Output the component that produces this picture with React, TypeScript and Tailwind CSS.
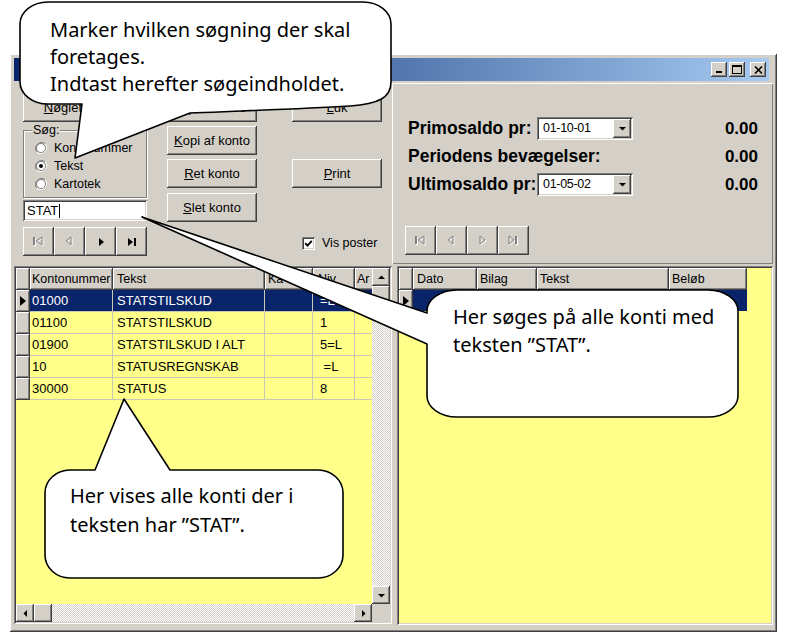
import React from "react";

const RAISED =
  "shadow-[inset_-1px_-1px_#404040,inset_1px_1px_#ffffff,inset_-2px_-2px_#808080,inset_2px_2px_#d4d0c8]";
const SUNKEN =
  "shadow-[inset_1px_1px_#808080,inset_-1px_-1px_#ffffff,inset_2px_2px_#404040,inset_-2px_-2px_#d4d0c8]";
const DITHER =
  "bg-[image:repeating-conic-gradient(#d4d0c8_0_25%,#ffffff_0_50%)] bg-[length:2px_2px]";
const COMIC = "font-['Comic_Sans_MS','Noto_Sans',sans-serif] text-[20px] text-black";

type Kind = "first" | "prev" | "next" | "last";

const shapes: Record<Kind, { tri: string; bar?: number }> = {
  first: { tri: "10,1 4,5 10,9", bar: 1 },
  prev: { tri: "8,1 3,5 8,9" },
  next: { tri: "4,1 9,5 4,9" },
  last: { tri: "2,1 7,5 2,9", bar: 8 },
};

const NavGlyph = ({ kind, disabled }: { kind: Kind; disabled?: boolean }) => {
  const s = shapes[kind];
  if (!disabled) {
    return (
      <svg width="12" height="10" viewBox="0 0 12 10">
        <polygon points={s.tri} fill="#000" />
        {s.bar !== undefined && <rect x={s.bar} y="1" width="2" height="8" fill="#000" />}
      </svg>
    );
  }
  return (
    <svg width="13" height="11" viewBox="0 0 13 11">
      {[{ c: "#ffffff", d: 1 }, { c: "#808080", d: 0 }].map((v) => (
        <g key={v.c} transform={`translate(${v.d} ${v.d})`} fill="none" stroke={v.c} strokeWidth="1">
          <polygon points={s.tri} />
          {s.bar !== undefined && <rect x={s.bar + 0.5} y="1.5" width="1" height="7" />}
        </g>
      ))}
    </svg>
  );
};

const NavBar = ({ enabled }: { enabled: Kind[] }) => (
  <div className="flex h-[29px]">
    {(["first", "prev", "next", "last"] as Kind[]).map((k) => (
      <div key={k} className={`w-[31px] h-full bg-[#d4d0c8] ${RAISED} flex items-center justify-center`}>
        <NavGlyph kind={k} disabled={!enabled.includes(k)} />
      </div>
    ))}
  </div>
);

const Button = ({ children, className = "" }: { children: React.ReactNode; className?: string }) => (
  <div
    className={`w-[90px] h-[29px] shrink-0 bg-[#d4d0c8] ${RAISED} flex items-center justify-center text-[13px] ${className}`}
  >
    {children}
  </div>
);

const U = ({ children }: { children: React.ReactNode }) => <span className="underline">{children}</span>;

const Radio = ({ checked }: { checked?: boolean }) => (
  <svg width="12" height="12" viewBox="0 0 12 12">
    <path d="M10.2 1.8 A6 6 0 0 0 1.8 10.2" fill="none" stroke="#808080" strokeWidth="1" />
    <path d="M1.8 10.2 A6 6 0 0 0 10.2 1.8" fill="none" stroke="#ffffff" strokeWidth="1" />
    <circle cx="6" cy="6" r="4.5" fill="#ffffff" stroke="#404040" strokeWidth="0.6" />
    {checked && <circle cx="6" cy="6" r="2" fill="#000" />}
  </svg>
);

const Arrow = ({ dir }: { dir: "up" | "down" | "left" | "right" }) => {
  const pts = {
    up: "1,6 8,6 4.5,2.5",
    down: "1,3 8,3 4.5,6.5",
    left: "6,1 6,8 2.5,4.5",
    right: "3,1 3,8 6.5,4.5",
  }[dir];
  return (
    <svg width="9" height="9" viewBox="0 0 9 9">
      <polygon points={pts} fill="#000" />
    </svg>
  );
};

const ScrollBtn = ({ dir }: { dir: "up" | "down" | "left" | "right" }) => (
  <div className={`w-[18px] h-[18px] shrink-0 bg-[#d4d0c8] ${RAISED} flex items-center justify-center`}>
    <Arrow dir={dir} />
  </div>
);

const TitleBtn = ({ children, className = "" }: { children: React.ReactNode; className?: string }) => (
  <div className={`w-[16px] h-[15px] bg-[#d4d0c8] ${RAISED} flex items-center justify-center ${className}`}>
    {children}
  </div>
);

const TitleBar = () => (
  <div className="h-[23px] mr-[4px] flex items-center justify-end pr-[3px] bg-linear-to-r from-[#0a246a] to-[#a6caf0]">
    <TitleBtn>
      <svg width="9" height="9" viewBox="0 0 9 9">
        <rect x="1" y="6" width="6" height="2" fill="#000" />
      </svg>
    </TitleBtn>
    <TitleBtn className="ml-[2px]">
      <svg width="10" height="9" viewBox="0 0 10 9">
        <rect x="0.5" y="0.5" width="9" height="8" fill="none" stroke="#000" />
        <rect x="0" y="0" width="10" height="2" fill="#000" />
      </svg>
    </TitleBtn>
    <TitleBtn className="ml-[5px]">
      <svg width="9" height="8" viewBox="0 0 9 8">
        <path d="M1 0.5 L8 7.5 M8 0.5 L1 7.5" stroke="#000" strokeWidth="1.6" />
      </svg>
    </TitleBtn>
  </div>
);

const LeftTop = () => (
  <div className="w-[378px] shrink-0 pl-[9px] pt-[11px] flex text-[13px]">
    <div className="w-[124px] flex flex-col">
      <Button>
        <span>
          <U>N</U>øgletal
        </span>
      </Button>
      <div className="relative mt-[8px] h-[68px] border border-[#808080] shadow-[inset_1px_1px_#ffffff,1px_1px_#ffffff] pl-[11px] pt-[8px]">
        <span className="absolute -top-[8px] left-[8px] px-[1px] bg-[#d4d0c8] text-[12.5px] leading-[14px]">
          Søg:
        </span>
        {[
          { label: "Kontonummer", checked: false },
          { label: "Tekst", checked: true },
          { label: "Kartotek", checked: false },
        ].map((r) => (
          <div key={r.label} className="h-[18px] flex items-center gap-[7px] text-[12.5px]">
            <Radio checked={r.checked} />
            <span>{r.label}</span>
          </div>
        ))}
      </div>
      <div className={`mt-[2px] h-[21px] bg-white ${SUNKEN} flex items-center pl-[4px] text-[13px]`}>
        STAT
        <span className="inline-block w-px h-[14px] bg-black ml-[1px]" />
      </div>
      <div className="mt-[6px]">
        <NavBar enabled={["next", "last"]} />
      </div>
    </div>
    <div className="ml-[20px] flex flex-col">
      <Button>
        <span>
          <U>O</U>pret konto
        </span>
      </Button>
      <Button className="mt-[4px]">
        <span>
          <U>K</U>opi af konto
        </span>
      </Button>
      <Button className="mt-[4px]">
        <span>
          <U>R</U>et konto
        </span>
      </Button>
      <Button className="mt-[5px]">
        <span>
          <U>S</U>let konto
        </span>
      </Button>
    </div>
    <div className="ml-[35px] flex flex-col">
      <Button>
        <span>
          <U>L</U>uk
        </span>
      </Button>
      <Button className="mt-[37px]">
        <span>
          <U>P</U>rint
        </span>
      </Button>
      <div className="mt-[46px] ml-[10px] flex items-center gap-[7px] text-[12.5px]">
        <div className={`w-[13px] h-[13px] bg-white ${SUNKEN} flex items-center justify-center`}>
          <svg width="9" height="9" viewBox="0 0 9 9">
            <path d="M1.2 4.2 L3.5 6.6 L7.8 1.8" fill="none" stroke="#000" strokeWidth="1.8" />
          </svg>
        </div>
        <span>Vis poster</span>
      </div>
    </div>
  </div>
);

const DateBox = ({ value }: { value: string }) => (
  <div className={`w-[96px] h-[23px] bg-white ${SUNKEN} flex items-center justify-between pl-[6px] pr-[2px]`}>
    <span className="text-[12.5px] tracking-[-0.3px] font-normal">{value}</span>
    <div className={`w-[18px] h-[19px] bg-[#d4d0c8] ${RAISED} flex items-center justify-center`}>
      <Arrow dir="down" />
    </div>
  </div>
);

const SaldoRow = ({ label, date, className = "" }: { label: string; date?: string; className?: string }) => (
  <div className={`h-[23px] flex items-center pl-[3px] ${className}`}>
    <span className="w-[129px] shrink-0 whitespace-nowrap text-[17.5px] font-bold">{label}</span>
    {date && <DateBox value={date} />}
    <span className="ml-auto text-[17px] font-bold">0.00</span>
  </div>
);

const RightTop = () => (
  <div className="flex-1 mt-[1px] h-[181px] shadow-[inset_1px_1px_#ffffff,inset_-1px_-1px_#808080,inset_-2px_-2px_#d4d0c8] pl-[13px] pr-[15px] pt-[34px]">
    <SaldoRow label="Primosaldo pr:" date="01-10-01" />
    <SaldoRow label="Periodens bevægelser:" className="mt-[5px]" />
    <SaldoRow label="Ultimosaldo pr:" date="01-05-02" className="mt-[5px]" />
    <div className="mt-[30px]">
      <NavBar enabled={[]} />
    </div>
  </div>
);

type Col = { title: string; w: number; pl: number };

const HeaderCell = ({ col }: { col: Col }) => (
  <div
    className={`shrink-0 h-full bg-[#d4d0c8] ${RAISED} flex items-center overflow-hidden whitespace-nowrap text-[12.5px]`}
    style={{ width: col.w, paddingLeft: col.pl }}
  >
    {col.title}
  </div>
);

const Indicator = ({ mark }: { mark?: boolean }) => (
  <div className={`w-[14px] shrink-0 h-full bg-[#d4d0c8] ${RAISED} flex items-center justify-center`}>
    {mark && (
      <svg width="6" height="10" viewBox="0 0 6 10">
        <polygon points="0,0 6,5 0,10" fill="#000" />
      </svg>
    )}
  </div>
);

const accountCols: Col[] = [
  { title: "Kontonummer", w: 83, pl: 2 },
  { title: "Tekst", w: 152, pl: 4 },
  { title: "Ka", w: 48, pl: 3 },
  { title: "Niv", w: 42, pl: 5 },
  { title: "Ar", w: 30, pl: 2 },
];

const accounts = [
  ["01000", "STATSTILSKUD", "", "=L"],
  ["01100", "STATSTILSKUD", "", "1"],
  ["01900", "STATSTILSKUD I ALT", "", "5=L"],
  ["10", "STATUSREGNSKAB", "", "\u00a0=L"],
  ["30000", "STATUS", "", "8"],
];

const cellPad = [2, 4, 3, 7, 3];

const AccountGrid = () => (
  <div className={`w-[378px] h-[358px] shrink-0 bg-[#d4d0c8] ${SUNKEN} p-[2px] flex flex-col`}>
    <div className="flex flex-1 min-h-0">
      <div className="flex-1 overflow-hidden bg-[#ffff8a]">
        <div className="flex h-[22px]">
          <Indicator />
          {accountCols.map((c) => (
            <HeaderCell key={c.title} col={c} />
          ))}
        </div>
        {accounts.map((row, i) => (
          <div key={row[0]} className="flex h-[22px]">
            <Indicator mark={i === 0} />
            {accountCols.map((c, j) => (
              <div
                key={c.title}
                className={`shrink-0 h-full flex items-center whitespace-nowrap overflow-hidden text-[13px] border-r border-b border-[#c8c8b4] ${
                  i === 0 ? "bg-[#0a246a] text-white" : ""
                }`}
                style={{ width: c.w, paddingLeft: cellPad[j] }}
              >
                {row[j] ?? ""}
              </div>
            ))}
          </div>
        ))}
      </div>
      <div className="w-[18px] flex flex-col">
        <ScrollBtn dir="up" />
        <div className={`w-[18px] h-[17px] bg-[#d4d0c8] ${RAISED}`} />
        <div className={`flex-1 ${DITHER}`} />
        <ScrollBtn dir="down" />
      </div>
    </div>
    <div className="flex h-[18px]">
      <ScrollBtn dir="left" />
      <div className={`w-[18px] h-[18px] bg-[#d4d0c8] ${RAISED}`} />
      <div className={`flex-1 ${DITHER}`} />
      <ScrollBtn dir="right" />
      <div className="w-[18px] bg-[#d4d0c8]" />
    </div>
  </div>
);

const postCols: Col[] = [
  { title: "Dato", w: 64, pl: 4 },
  { title: "Bilag", w: 60, pl: 3 },
  { title: "Tekst", w: 132, pl: 3 },
  { title: "Beløb", w: 78, pl: 3 },
];

const PostGrid = () => (
  <div className={`flex-1 h-[359px] bg-[#ffff8a] ${SUNKEN} p-[2px]`}>
    <div className="flex h-[22px]">
      <Indicator />
      {postCols.map((c) => (
        <HeaderCell key={c.title} col={c} />
      ))}
    </div>
    <div className="flex h-[22px]">
      <Indicator mark />
      <div className="w-[334px] h-[21px] bg-[#0a246a]" />
    </div>
  </div>
);

const Window = () => (
  <div className={`w-[767px] h-[578px] bg-[#d4d0c8] p-[4px] flex flex-col ${RAISED}`}>
    <TitleBar />
    <div className="mt-[1px] flex h-[183px]">
      <LeftTop />
      <RightTop />
    </div>
    <div className="mt-[1px] flex h-[360px] items-start">
      <AccountGrid />
      <div className="w-[5px] shrink-0" />
      <PostGrid />
    </div>
  </div>
);

const Callouts = () => (
  <>
    <svg className="absolute inset-0 pointer-events-none" width="792" height="637" viewBox="0 0 792 637">
      <g fill="#ffffff" stroke="#000000" strokeWidth="1.6" strokeLinejoin="round">
        <path d="M48 2 H363 A28 22 0 0 1 391 24 V82 C391 98 378 104 350 106 C300 109 240 111 190 113 L75 158 L82 104 H48 A28 22 0 0 1 20 82 V24 A28 22 0 0 1 48 2 Z" />
        <path d="M457 290 H708 A30 21 0 0 1 738 311 V396 A30 21 0 0 1 708 417 H457 A30 21 0 0 1 427 396 V344 L142 217 L427 313 V311 A30 21 0 0 1 457 290 Z" />
        <path d="M70 470 H95 L124 399 L170 470 H318 A25 23 0 0 1 343 493 V555 A25 23 0 0 1 318 578 H70 A25 23 0 0 1 45 555 V493 A25 23 0 0 1 70 470 Z" />
      </g>
    </svg>
    <div className={`absolute left-[50px] top-[16px] leading-[27px] whitespace-nowrap ${COMIC}`}>
      Marker hvilken søgning der skal
      <br />
      foretages.
      <br />
      Indtast herefter søgeindholdet.
    </div>
    <div className={`absolute left-[453px] top-[303px] leading-[28px] whitespace-nowrap ${COMIC}`}>
      Her søges på alle konti med
      <br />
      teksten ”STAT”.
    </div>
    <div className={`absolute left-[70px] top-[481px] leading-[29px] whitespace-nowrap ${COMIC}`}>
      Her vises alle konti der i
      <br />
      teksten har ”STAT”.
    </div>
  </>
);

export default function App() {
  return (
    <div className="relative w-[792px] h-[637px] overflow-hidden bg-white text-black font-['Liberation_Sans',Arial,sans-serif]">
      <div className="pl-[10px] pt-[54px]">
        <Window />
      </div>
      <Callouts />
    </div>
  );
}
